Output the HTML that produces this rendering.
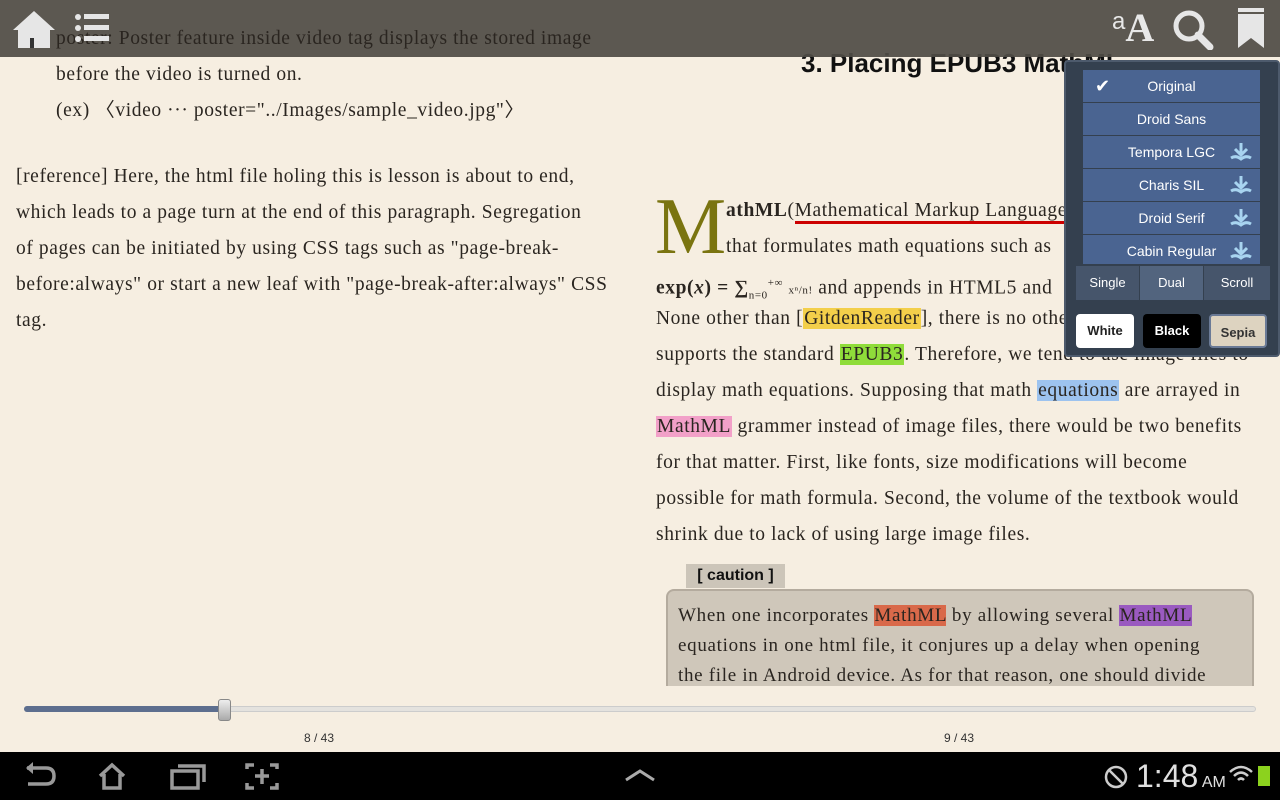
<!DOCTYPE html>
<html><head><meta charset="utf-8"><style>
*{margin:0;padding:0;box-sizing:border-box}
body{width:1280px;height:800px;overflow:hidden;background:#f6eee1;position:relative;font-family:"Liberation Serif",serif;color:#2a2520}
.t{position:absolute;font-size:19.5px;letter-spacing:0.6px;white-space:nowrap;line-height:36px;z-index:2;margin-top:2px}
.top{position:absolute;left:0;top:0;width:1280px;height:57px;background:rgba(80,76,70,0.93);z-index:1}
.hl{padding:0 1px}
.pop{position:absolute;left:1064px;top:60px;width:216px;height:297px;background:#34404f;border:2px solid #4d5a6c;border-radius:4px;z-index:5}
.it{position:absolute;left:17px;width:177px;height:32px;background:#4a6491;color:#fff;font:14px "Liberation Sans",sans-serif;text-align:center;line-height:32px}
.seg{position:absolute;top:204px;height:34px;background:#46556b;color:#fff;font:13px "Liberation Sans",sans-serif;text-align:center;line-height:34px}
.btn{position:absolute;top:252px;width:58px;height:34px;border-radius:4px;font:bold 13px "Liberation Sans",sans-serif;text-align:center;line-height:34px}
.dl{position:absolute;right:8px;top:6px}
.c{position:absolute;left:10px;line-height:30px;font-size:19px;letter-spacing:0.7px;white-space:nowrap}
.ic{position:absolute;z-index:3}
</style></head><body>
<div class="t" style="left:56px;top:19px">poster: Poster feature inside video tag displays the stored image</div>
<div class="top"></div>
<svg class="ic" style="left:10px;top:8px" width="48" height="42" viewBox="0 0 48 42"><path d="M24 3 L3 22 L8 22 L8 40 L40 40 L40 22 L45 22 Z" fill="#e6e6e6"/><rect x="20" y="30" width="4" height="10" fill="#333"/></svg>
<svg class="ic" style="left:72px;top:12px" width="40" height="34"><g fill="#e6e6e6"><circle cx="6" cy="5" r="3"/><circle cx="6" cy="16" r="3"/><circle cx="6" cy="27" r="3"/><rect x="12" y="2" width="25" height="5"/><rect x="12" y="13" width="25" height="5"/><rect x="12" y="24" width="25" height="5"/></g></svg>
<div class="ic" style="left:1112px;top:4px;color:#e8e8e8;font:bold 40px 'Liberation Serif',serif"><span style="font:24px 'Liberation Sans',sans-serif;vertical-align:12px">a</span>A</div>
<svg class="ic" style="left:1170px;top:8px" width="46" height="42"><circle cx="19" cy="18" r="13" stroke="#e6e6e6" stroke-width="5" fill="none"/><path d="M28 27 L40 39" stroke="#e6e6e6" stroke-width="7" stroke-linecap="round"/></svg>
<svg class="ic" style="left:1238px;top:8px" width="26" height="42"><rect x="0" y="0" width="26" height="4" fill="#e6e6e6"/><path d="M0 6 H26 V40 L13 30 L0 40Z" fill="#e6e6e6"/></svg>

<div class="t" style="left:56px;top:55px">before the video is turned on.</div>
<div class="t" style="left:56px;top:91px">(ex) 〈video ··· poster="../Images/sample_video.jpg"〉</div>
<div class="t" style="left:16px;top:157px">[reference] Here, the html file holing this is lesson is about to end,</div>
<div class="t" style="left:16px;top:193px">which leads to a page turn at the end of this paragraph. Segregation</div>
<div class="t" style="left:16px;top:229px">of pages can be initiated by using CSS tags such as "page-break-</div>
<div class="t" style="left:16px;top:265px">before:always" or start a new leaf with "page-break-after:always" CSS</div>
<div class="t" style="left:16px;top:301px">tag.</div>

<div style="position:absolute;left:801px;top:48px;font:bold 26px 'Liberation Sans',sans-serif;color:#111">3. Placing EPUB3 MathML</div>
<div style="position:absolute;left:655px;top:182px;font:80px 'Liberation Serif',serif;color:#7a7410;line-height:90px">M</div>
<div class="t" style="left:726px;top:191px"><b>athML</b>(<span style="border-bottom:3px solid #c00">Mathematical Markup Language</span>) is</div>
<div class="t" style="left:726px;top:227px">that formulates math equations such as</div>
<div class="t" style="left:656px;top:263px"><b>exp(<i>x</i>) = ∑</b><sub style="font-size:11px">n=0</sub><sup style="font-size:11px">+∞</sup> <span style="font-size:11px">xⁿ/n!</span> and appends in HTML5 and</div>
<div class="t" style="left:656px;top:299px">None other than [<span class="hl" style="background:#f3cf4a">GitdenReader</span>], there is no other</div>
<div class="t" style="left:656px;top:335px">supports the standard <span class="hl" style="background:#8fdc3a">EPUB3</span>. Therefore, we tend to use image files to</div>
<div class="t" style="left:656px;top:371px">display math equations. Supposing that math <span class="hl" style="background:#9dc3ef">equations</span> are arrayed in</div>
<div class="t" style="left:656px;top:407px"><span class="hl" style="background:#f2a0c8">MathML</span> grammer instead of image files, there would be two benefits</div>
<div class="t" style="left:656px;top:443px">for that matter. First, like fonts, size modifications will become</div>
<div class="t" style="left:656px;top:479px">possible for math formula. Second, the volume of the textbook would</div>
<div class="t" style="left:656px;top:515px">shrink due to lack of using large image files.</div>

<div style="position:absolute;left:686px;top:564px;width:99px;height:24px;background:#ccc5b9;font:bold 16px 'Liberation Sans',sans-serif;text-align:center;line-height:24px;color:#111">[ caution ]</div>
<div style="position:absolute;left:666px;top:589px;width:588px;height:97px;background:#cfc7ba;border:2px solid #b4ab9e;border-bottom:none;border-radius:8px 8px 0 0;overflow:hidden">
<div class="c" style="top:10px">When one incorporates <span style="background:#d9694a">MathML</span> by allowing several <span style="background:#9a5ac0">MathML</span></div>
<div class="c" style="top:40px">equations in one html file, it conjures up a delay when opening</div>
<div class="c" style="top:70px">the file in Android device. As for that reason, one should divide</div>
</div>

<div class="pop">
<div class="it" style="top:8px">Original<span style="position:absolute;left:12px;font-size:18px">✔</span></div>
<div class="it" style="top:41px">Droid Sans</div>
<div class="it" style="top:74px">Tempora LGC<svg class="dl" width="22" height="20"><path d="M11 1V12M5 7L11 13L17 7M1 16Q6 13 11 17Q16 13 21 16" stroke="#a8d4f0" stroke-width="3" fill="none"/></svg></div>
<div class="it" style="top:107px">Charis SIL<svg class="dl" width="22" height="20"><path d="M11 1V12M5 7L11 13L17 7M1 16Q6 13 11 17Q16 13 21 16" stroke="#a8d4f0" stroke-width="3" fill="none"/></svg></div>
<div class="it" style="top:140px">Droid Serif<svg class="dl" width="22" height="20"><path d="M11 1V12M5 7L11 13L17 7M1 16Q6 13 11 17Q16 13 21 16" stroke="#a8d4f0" stroke-width="3" fill="none"/></svg></div>
<div class="it" style="top:173px;height:29px">Cabin Regular<svg class="dl" width="22" height="20"><path d="M11 1V12M5 7L11 13L17 7M1 16Q6 13 11 17Q16 13 21 16" stroke="#a8d4f0" stroke-width="3" fill="none"/></svg></div>
<div class="seg" style="left:10px;width:63px">Single</div>
<div class="seg" style="left:74px;width:63px;background:#52647e">Dual</div>
<div class="seg" style="left:138px;width:66px">Scroll</div>
<div class="btn" style="left:10px;background:#fff;color:#222">White</div>
<div class="btn" style="left:77px;background:#000;color:#fff">Black</div>
<div class="btn" style="left:143px;background:#ddd3c0;color:#333;border:2px solid #6a7a96">Sepia</div>
</div>

<div style="position:absolute;left:24px;top:706px;width:1232px;height:6px;background:#e4e2de;border-radius:3px;border:1px solid #ccc"></div>
<div style="position:absolute;left:24px;top:706px;width:200px;height:6px;background:#5d6e8e;border-radius:3px"></div>
<div style="position:absolute;left:218px;top:699px;width:13px;height:22px;background:linear-gradient(#eee,#aaa);border:1px solid #888;border-radius:3px"></div>
<div style="position:absolute;left:304px;top:731px;font:12px 'Liberation Sans',sans-serif;color:#333">8 / 43</div>
<div style="position:absolute;left:944px;top:731px;font:12px 'Liberation Sans',sans-serif;color:#333">9 / 43</div>

<div style="position:absolute;left:0;top:752px;width:1280px;height:48px;background:#000"></div>
<svg style="position:absolute;left:0;top:752px" width="300" height="48"><g stroke="#999" stroke-width="3.5" fill="none"><path d="M27 16H46Q54 16 54 24Q54 32 46 32H28"/><path d="M100 24L112 13L124 24M104 22V36H120V22"/><path d="M172 19H198V36H172Z M178 14H204V30"/><path d="M247 17V13H254M270 13H277V17M247 31V36H254M270 36H277V31M262 17V32M255 24H269"/></g><path d="M26 16L33 10V22Z" fill="#999"/></svg>
<svg style="position:absolute;left:624px;top:768px" width="32" height="16"><path d="M2 12L16 3L30 12" stroke="#aaa" stroke-width="3" fill="none"/></svg>
<svg style="position:absolute;left:1103px;top:764px" width="26" height="26"><circle cx="13" cy="13" r="10" stroke="#ccc" stroke-width="2.5" fill="none"/><path d="M6 6L20 20" stroke="#ccc" stroke-width="2.5"/></svg>
<div style="position:absolute;left:1136px;top:758px;font:32px 'Liberation Sans',sans-serif;color:#e0e0e0">1:48<span style="font-size:16px"> AM</span></div>
<svg style="position:absolute;left:1228px;top:764px" width="26" height="24"><path d="M2 8Q13 -2 24 8M6 12Q13 5 20 12M10 16Q13 13 16 16" stroke="#ccc" stroke-width="2.5" fill="none"/></svg>
<div style="position:absolute;left:1258px;top:766px;width:12px;height:20px;background:#8cd21e"></div>
</body></html>
